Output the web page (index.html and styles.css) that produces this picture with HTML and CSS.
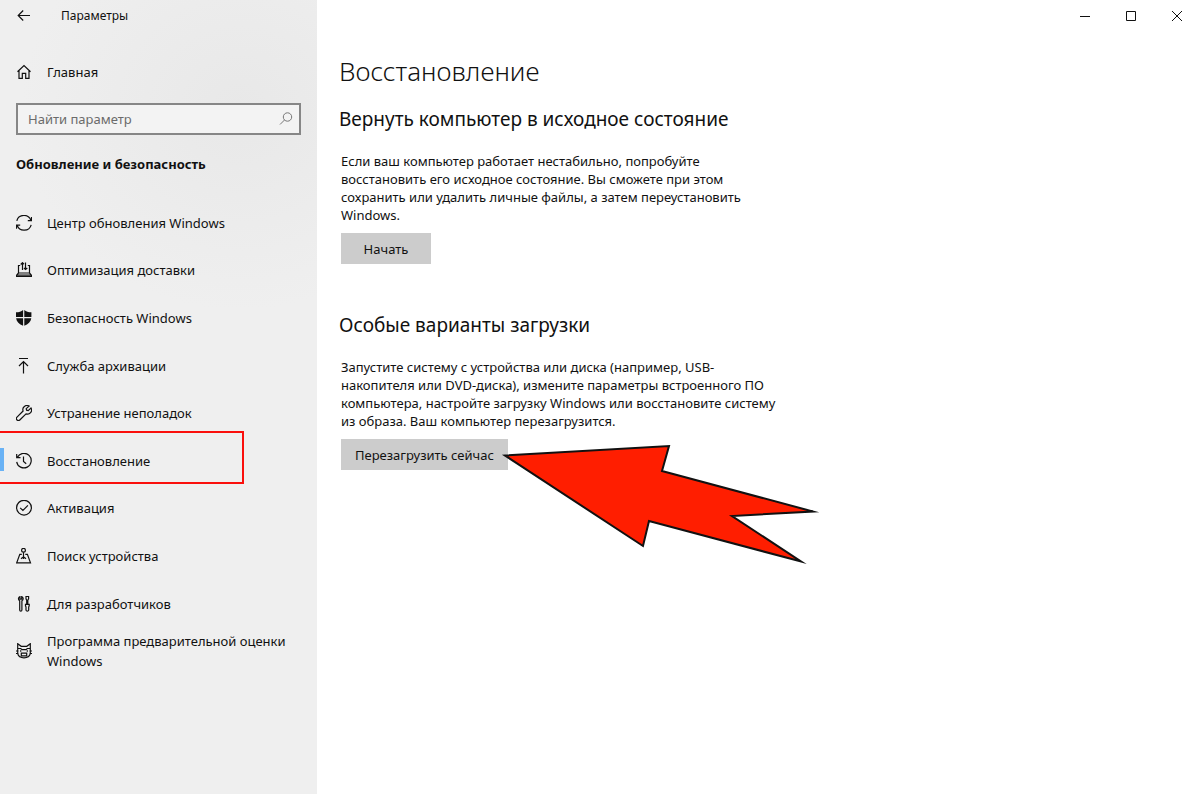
FILE: index.html
```html
<!DOCTYPE html>
<html lang="ru">
<head>
<meta charset="utf-8">
<title>Параметры</title>
<link rel="stylesheet" href="styles.css">
</head>
<body>
<div class="window">
  <aside class="sidebar">
    <header class="titlebar">
      <button class="icon-button" type="button" aria-label="Назад">
        <svg class="icon" viewBox="0 0 16 16"><path d="M14 7.5H2.2M7.2 2.5l-5 5 5 5"/></svg>
      </button>
      <span class="app-name">Параметры</span>
    </header>
    <a class="nav-link home" href="#">
      <svg class="icon" viewBox="0 0 16 16"><path d="M1.5 7.800L8 1.600l6.500 6.200M3 6.600V14.300h3.300V9.300h3.400v5H13V6.600"/></svg>
      <span>Главная</span>
    </a>
    <label class="search">
      <input class="search-input" type="text" placeholder="Найти параметр" aria-label="Найти параметр">
      <svg class="search-icon" viewBox="0 0 16 16"><circle cx="9.500" cy="6" r="4.200"/><path d="M6.500 9L2 13.500"/></svg>
    </label>
    <h2 class="category">Обновление и безопасность</h2>
    <nav>
      <ul class="nav-list">
        <li class="nav-item"><a class="nav-link" href="#">
          <svg class="icon" viewBox="0 0 16 16"><path d="M.8 5.800A7.400 7.400 0 0 1 14.900 5.300M15.500 2v3.700h-3.700M15.200 9.800A7.400 7.400 0 0 1 1.100 10.300M.5 13.800v-3.700h3.700"/></svg>
          <span>Центр обновления Windows</span></a></li>
        <li class="nav-item"><a class="nav-link" href="#">
          <svg class="icon" viewBox="0 0 16 16"><path d="M4.200 3.500H2.500v7.500h11V3.500h-1.700M2.500 11L.6 13.200v1.200h14.800v-1.200L13.500 11M.6 13h14.800M6.500 8V.7M4.700 2.500L6.500.7l1.500 1.500M9.500.5v7M8 6l1.500 1.500L11.300 6"/></svg>
          <span>Оптимизация доставки</span></a></li>
        <li class="nav-item"><a class="nav-link" href="#">
          <svg class="icon" viewBox="0 0 16 16"><path class="solid" d="M7.100 0v7.100H0V2.300C3 2.300 5.300 1.500 7.100 0zM8.300 0c1.800 1.500 4.100 2.300 7.100 2.300v4.800H8.300zM.1 8.200h7v7.600C3.200 14.200.6 11.800.1 8.200zM15.300 8.200h-7v7.600c3.900-1.600 6.500-4 7-7.600z"/></svg>
          <span>Безопасность Windows</span></a></li>
        <li class="nav-item"><a class="nav-link" href="#">
          <svg class="icon" viewBox="0 0 16 16"><path d="M3 .5h9M7.500 15.500V3.500M3 8l4.500-4.500L12 8"/></svg>
          <span>Служба архивации</span></a></li>
        <li class="nav-item"><a class="nav-link" href="#">
          <svg class="icon" viewBox="0 0 16 16"><path d="M13.100 1.100a4.100 4.100 0 0 0-6 4.900L1 12.200a1.900 1.900 0 0 0 2.800 2.800L10 8.900a4.100 4.100 0 0 0 5-5.900l-2.800 2.600-1.600-.4-.4-1.600z"/></svg>
          <span>Устранение неполадок</span></a></li>
        <li class="nav-item current"><a class="nav-link" href="#" aria-current="page">
          <svg class="icon" viewBox="0 0 16 16"><path d="M1.400 4.300A7.300 7.300 0 1 1 .7 8.800M.7 1v3.700h3.800M7.500 3.500V8.500l2.700 2.200"/></svg>
          <span>Восстановление</span></a></li>
        <li class="nav-item"><a class="nav-link" href="#">
          <svg class="icon" viewBox="0 0 16 16"><circle cx="8" cy="7.700" r="7.400"/><path d="M4.200 7.900l2.700 2.600 5-5.200"/></svg>
          <span>Активация</span></a></li>
        <li class="nav-item"><a class="nav-link" href="#">
          <svg class="icon" viewBox="0 0 16 16"><circle cx="7.500" cy="2.300" r="1.900"/><path d="M7.500 4.200V11M5.800 6.300H3.800L.7 14.800h13.800L11.400 6.300H9.300M5 10.800l2.500-2 2.500 2"/></svg>
          <span>Поиск устройства</span></a></li>
        <li class="nav-item"><a class="nav-link" href="#">
          <svg class="icon" viewBox="0 0 16 16"><path d="M4 .6a2.300 2.300 0 0 0-.3 4.200v9.300a1.100 1.100 0 0 0 2.200 0V4.800A2.300 2.300 0 0 0 5.700.6v2.500H4zM10.700 8.300V4.100L10 2.800V.5h2.600v2.300l-.8 1.300v4.200M9.500 8.300h3.700v1.700l-.5.800v3.300a1.400 1.400 0 0 1-2.700 0v-3.300l-.5-.8z"/></svg>
          <span>Для разработчиков</span></a></li>
        <li class="nav-item"><a class="nav-link" href="#">
          <svg class="icon" viewBox="0 0 16 16"><path d="M1.700 8V.7l3.500 2.600h5.600L14.300.7V8M1.700 5.500h3l1.300 1.200h4l1.300-1.200h3M0 8h2.500M13.500 8H16M0 10.500h2.500M13.500 10.500H16M1.700 8v2.700c.6 2.700 2.700 4.100 6.300 4.100s5.700-1.400 6.300-4.100V8M5.300 10.200h5.400v2.600H5.300zM4.700 7.300v1.500M11.300 7.300v1.500"/></svg>
          <span>Программа предварительной оценки Windows</span></a></li>
      </ul>
    </nav>
  </aside>

  <div class="content">
    <div class="window-controls">
      <button class="icon-button" type="button" aria-label="Свернуть"><svg class="control-icon" viewBox="0 0 12 12"><path d="M1 6.500h10"/></svg></button>
      <button class="icon-button" type="button" aria-label="Развернуть"><svg class="control-icon" viewBox="0 0 12 12"><path d="M1.500 1.500h9v9h-9z"/></svg></button>
      <button class="icon-button" type="button" aria-label="Закрыть"><svg class="control-icon" viewBox="0 0 12 12"><path d="M1 1l10 10M11 1L1 11"/></svg></button>
    </div>
    <main class="page">
      <h1 class="page-title">Восстановление</h1>
      <section class="section">
        <h2 class="section-title">Вернуть компьютер в исходное состояние</h2>
        <div class="section-body">
          <p class="text">Если ваш компьютер работает нестабильно, попробуйте<br>восстановить его исходное состояние. Вы сможете при этом<br>сохранить или удалить личные файлы, а затем переустановить<br>Windows.</p>
          <button class="action" type="button">Начать</button>
        </div>
      </section>
      <section class="section">
        <h2 class="section-title">Особые варианты загрузки</h2>
        <div class="section-body">
          <p class="text">Запустите систему с устройства или диска (например, USB-<br>накопителя или DVD-диска), измените параметры встроенного ПО<br>компьютера, настройте загрузку Windows или восстановите систему<br>из образа. Ваш компьютер перезагрузится.</p>
          <div class="action-row">
            <button class="action restart" type="button">Перезагрузить сейчас</button>
            <svg class="pointer" viewBox="0 0 328 128" aria-hidden="true"><path d="M9 16.500L173 7l-7 25 151 40.500L236 77l69 45.500L153 82l-6 25z"/></svg>
          </div>
        </div>
      </section>
    </main>
  </div>
</div>
</body>
</html>
```
FILE: styles.css
```css
* { box-sizing: border-box; }

body {
  margin: 0;
  background: #fff;
  color: #111;
  font: 13px/20px "Noto Sans", "Open Sans", sans-serif;
}

button, input { font: inherit; color: inherit; }

h1, h2, p, ul { margin: 0; padding: 0; font-weight: 400; }

.window { display: flex; min-height: 100vh; }

.sidebar {
  flex: 0 0 317px;
  background: radial-gradient(ellipse 220px 200px at 240px 110px, #e8e8e8, #efefef) #efefef;
}

.titlebar {
  display: flex;
  align-items: center;
  gap: 29px;
  height: 32px;
  padding-left: 16px;
  font-size: 12px;
}

.icon-button {
  display: flex;
  padding: 0;
  border: 0;
  background: none;
}

.icon, .search-icon, .control-icon {
  flex: none;
  width: 16px;
  height: 16px;
  fill: none;
  stroke: #111;
  stroke-width: 1.2;
}

.icon .solid { fill: #111; stroke: none; }

.control-icon { width: 12px; height: 12px; stroke-width: 1; }

.nav-link {
  display: flex;
  align-items: center;
  gap: 15px;
  padding: 0 16px;
  color: inherit;
  text-decoration: none;
}

.home { margin-top: 30px; }

.search {
  display: flex;
  align-items: center;
  height: 32px;
  margin: 21px 16px 0;
  padding: 0 5px 1px 10px;
  border: 2px solid #868686;
  background: #f3f3f3;
}

.search-input {
  flex: 1;
  min-width: 0;
  padding: 0;
  border: 0;
  outline: 0;
  background: none;
}

.search-input::placeholder { color: #6b6b6b; opacity: 1; }

.search-icon { stroke: #777; stroke-width: 1; }

.category {
  margin: 19px 16px 25px;
  font-size: 13px;
  font-weight: 700;
}

.nav-list {
  display: grid;
  grid-auto-rows: 1fr;
  min-height: 476px;
  list-style: none;
}

.nav-item { display: grid; align-items: center; position: relative; }

.current::before {
  content: "";
  position: absolute;
  left: 0;
  top: 11px;
  width: 4px;
  height: 23px;
  background: #69b2f5;
}

.current::after {
  content: "";
  position: absolute;
  inset: -6px 73px 1px 0;
  border: 2px solid #fa0f0c;
  border-left: 0;
  pointer-events: none;
}

.content { flex: 1; min-width: 0; }

.window-controls {
  display: flex;
  justify-content: flex-end;
  align-items: center;
  gap: 34px;
  height: 32px;
  padding-right: 17px;
}

.page { padding: 21px 22px; }

.page-title { font-size: 26px; line-height: 36px; font-weight: 300; }

.section { margin-bottom: 48px; }

.section-title { margin-top: 17px; font-size: 19px; line-height: 26px; }

.section-body { padding: 20px 2px 0; }

.text { margin-bottom: 8px; line-height: 18px; }

.page-title + .section .text,
.section .text { padding-bottom: 1px; }

.action {
  min-width: 90px;
  height: 31px;
  padding: 0 14px;
  border: 0;
  background: #ccc;
}

.action-row { position: relative; }

.pointer {
  position: absolute;
  left: 155px;
  top: 0;
  width: 328px;
  height: 128px;
  fill: #ff1e00;
  stroke: #111;
  stroke-width: 2;
  stroke-miterlimit: 10;
}
```
